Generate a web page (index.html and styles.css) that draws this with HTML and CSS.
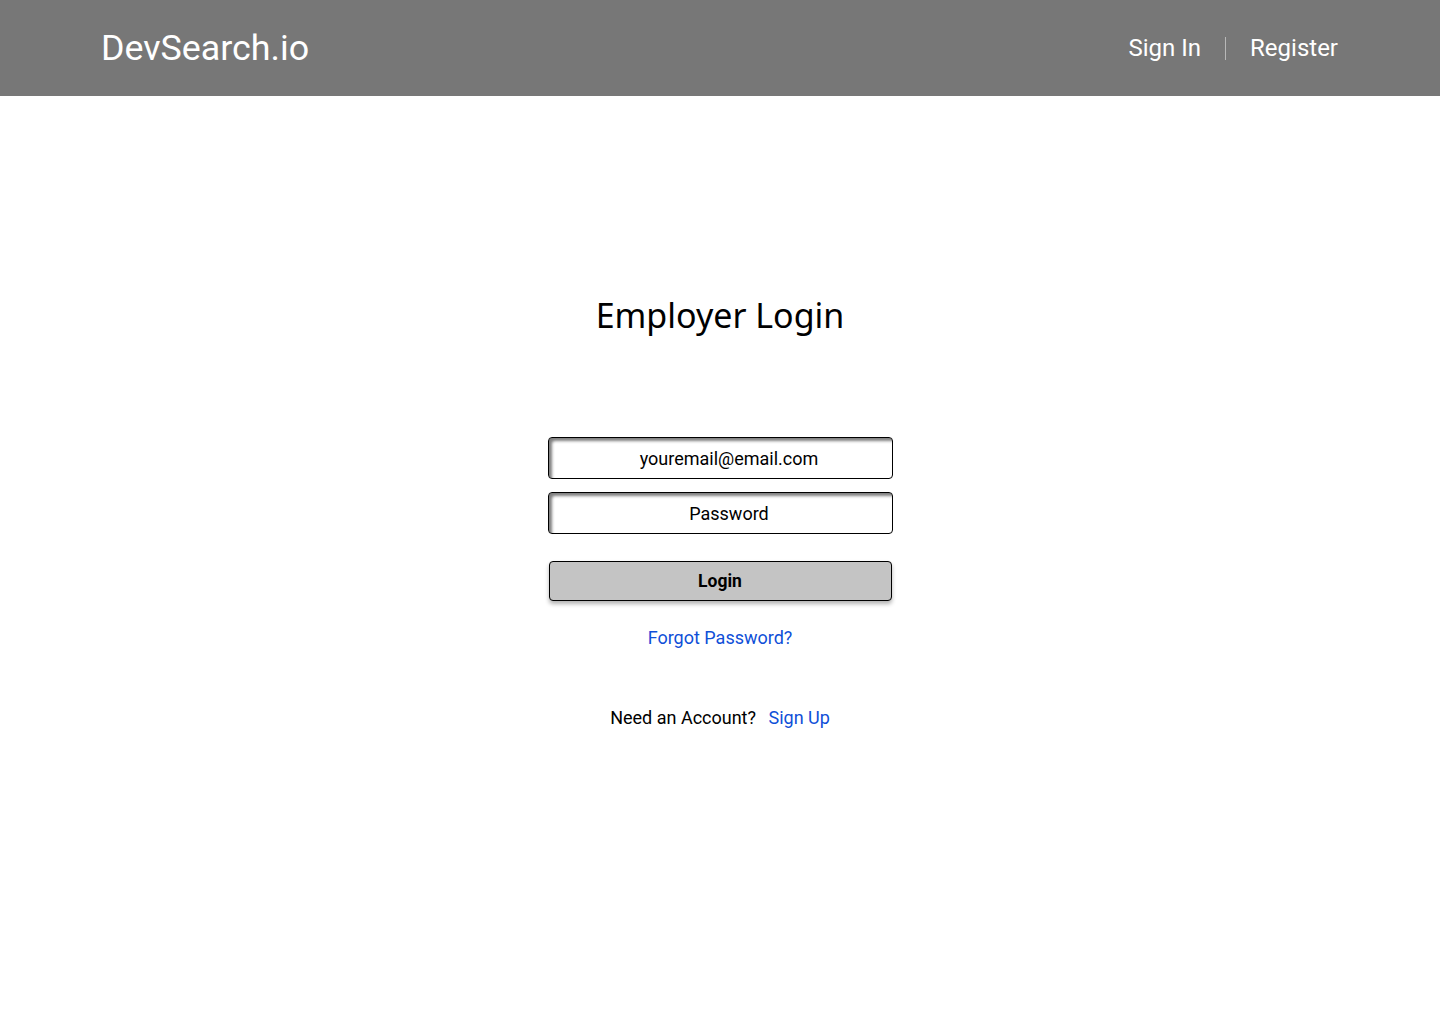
FILE: index.html
```html
<!DOCTYPE html>
<html>
<head>
<meta charset="utf-8">
<link rel="stylesheet" href="styles.css">
</head>
<body>
<header class="topbar">
  <div class="logo">DevSearch.io</div>
  <nav class="nav">
    <a class="nav-link">Sign In</a>
    <span class="nav-sep"></span>
    <a class="nav-link">Register</a>
  </nav>
</header>
<main class="main">
  <h1 class="title">Employer Login</h1>
  <form class="form">
    <div class="field">youremail@email.com</div>
    <div class="field">Password</div>
    <div class="btn">Login</div>
  </form>
  <a class="link forgot">Forgot Password?</a>
  <p class="signup">Need an Account? <a class="link">Sign Up</a></p>
</main>
</body>
</html>
```

FILE: styles.css
```css
* { box-sizing: border-box; }
html, body { margin: 0; padding: 0; }
body {
  font-family: Roboto, "Liberation Sans", sans-serif;
  background: #fff;
  color: #000;
  width: 1440px;
  height: 1024px;
}
.topbar {
  height: 96px;
  background: #777777;
  display: flex;
  align-items: center;
  justify-content: space-between;
  padding: 0 102px 0 101px;
}
.logo {
  font-size: 35.8px;
  color: #fff;
}
.nav {
  display: flex;
  align-items: center;
  gap: 24px;
}
.nav-link {
  font-size: 24px;
  color: #fff;
}
.nav-sep {
  width: 1px;
  height: 23px;
  background: #b8b8b8;
}
.main {
  display: flex;
  flex-direction: column;
  align-items: center;
}
.title {
  font-family: "Noto Sans", sans-serif;
  font-weight: 400;
  font-size: 34px;
  margin: 193px 0 0 0;
  line-height: 52px;
}
.form {
  margin-top: 96px;
  width: 345px;
  display: flex;
  flex-direction: column;
  align-items: center;
}
.field {
  width: 345px;
  height: 42px;
  border: 1px solid #000;
  border-radius: 4px;
  box-shadow: inset 3px 3px 3px rgba(0,0,0,0.5);
  display: flex;
  align-items: center;
  justify-content: center;
  font-size: 18px;
  padding-left: 18px;
  margin-bottom: 13px;
}
.btn {
  width: 343px;
  height: 40px;
  margin-top: 14px;
  background: #c4c4c4;
  border: 1px solid #000;
  border-radius: 4px;
  box-shadow: 0 3px 4px rgba(0,0,0,0.3);
  display: flex;
  align-items: center;
  justify-content: center;
  font-size: 17.5px;
  font-weight: 700;
}
.link {
  color: #0f4fd8;
}
.forgot {
  font-size: 18px;
  margin-top: 26px;
}
.signup {
  font-size: 18px;
  margin: 59px 0 0 0;
}
.signup .link { margin-left: 8px; }
```
